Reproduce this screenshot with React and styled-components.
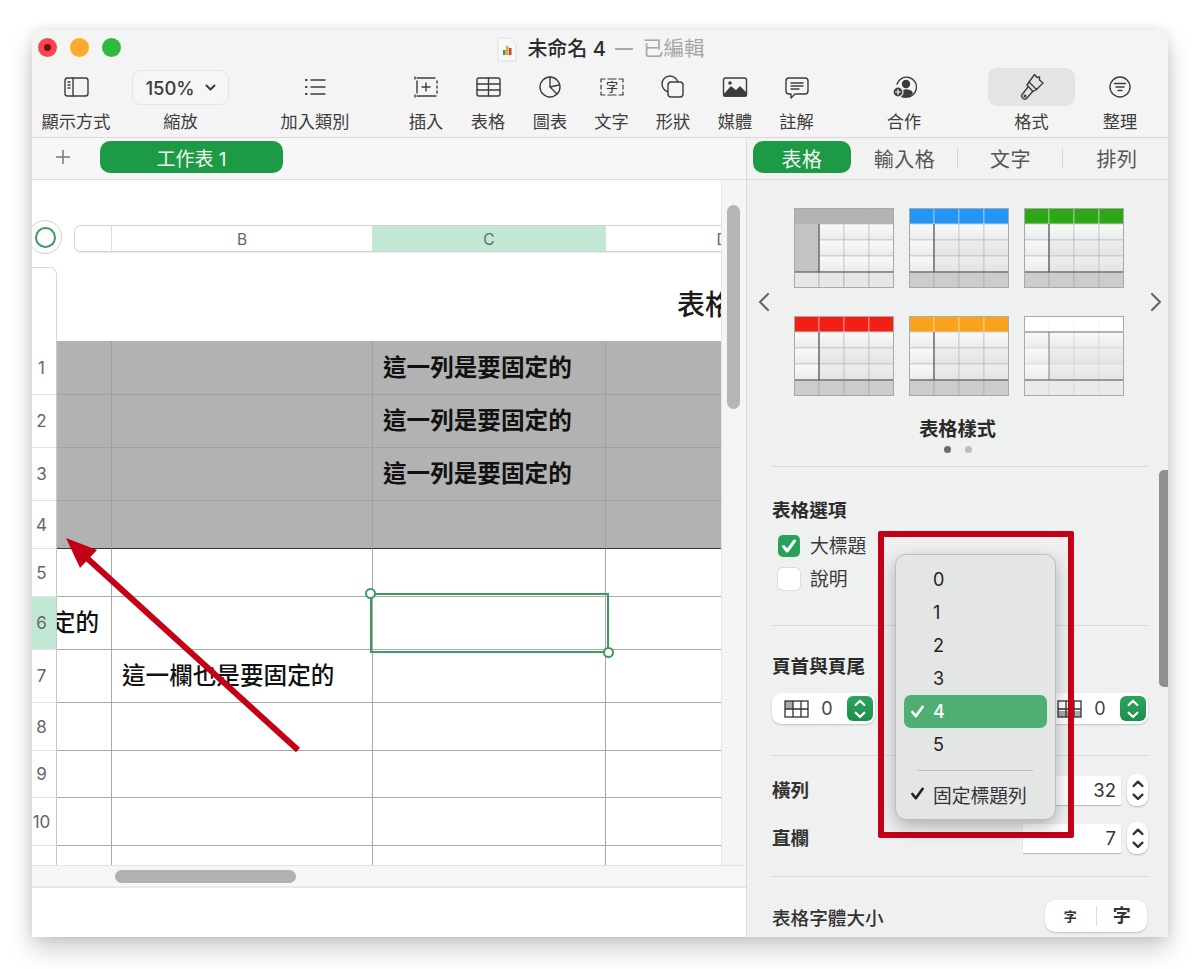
import React from "react";
import styled, { createGlobalStyle } from "styled-components";

const Global = createGlobalStyle`
  html, body { margin: 0; padding: 0; background: #fff; }
  body { font-family: Inter, "Noto Sans CJK TC", sans-serif; color: #333; overflow: hidden; }
  * { box-sizing: border-box; }
`;

const Page = styled.div`
  width: 1200px; height: 969px; padding: 30px 32px 32px; overflow: hidden;
`;
const Window = styled.div`
  position: relative; width: 1136px; height: 907px; background: #fff;
  border-radius: 12px 12px 0 0; overflow: visible;
  box-shadow: 0 12px 26px rgba(0,0,0,.2), 0 0 12px rgba(0,0,0,.1);
  display: flex; flex-direction: column;
`;
const Toolbar = styled.header`
  height: 108px; background: #f3f4f3; border-bottom: 1px solid #d8d8d8;
  border-radius: 12px 12px 0 0; display: flex; flex-direction: column;
`;
const TitleRow = styled.div`
  height: 38px; position: relative; display: flex; align-items: center; justify-content: center;
`;
const Lights = styled.div`
  position: absolute; left: 6px; top: 8px; display: flex; gap: 13px;
`;
const Light = styled.span`
  width: 19px; height: 19px; border-radius: 50%; background: ${p => p.$c};
  display: flex; align-items: center; justify-content: center;
  &::after { content: ""; width: 7px; height: 7px; border-radius: 50%; background: ${p => p.$dot || "transparent"}; }
`;
const DocTitle = styled.div`
  display: flex; align-items: center; margin-left: 2px;
`;
const TitleName = styled.span`
  font-size: 20px; font-weight: 500; color: #2c2c2c; margin: 0 9px 0 10px; line-height: 36px;
`;
const TitleDash = styled.span`
  width: 18px; height: 2px; background: #a9a9a9; margin-right: 10px;
`;
const TitleState = styled.span`
  font-size: 20.600px; color: #a6a8a6; line-height: 36px;
`;
const ToolRow = styled.div`
  display: flex; height: 68px;
`;
const Tool = styled.div`
  width: ${p => p.$w}px; margin-left: ${p => p.$ml || 0}px; display: flex; flex-direction: column; align-items: center;
`;
const IconSlot = styled.div`
  height: 38px; width: ${p => p.$active ? "87px" : "100%"}; display: flex; align-items: center; justify-content: center;
  color: #3c3c3c; border-radius: 9px; background: ${p => p.$active ? "#e3e4e3" : "transparent"};
`;
const ToolLabel = styled.div`
  height: 30px; line-height: 32px; font-size: 17.200px; color: #3d3d3d; white-space: nowrap;
`;
const ZoomBox = styled.div`
  height: 35px; width: 97px; margin-top: 2px; margin-bottom: 1px; border: 1px solid #e3e4e3; border-radius: 9px; background: #f5f6f5;
  display: flex; align-items: center; justify-content: center; gap: 10px; font-size: 18.400px; font-weight: 500; color: #3a3a3a;
`;
const Main = styled.div`
  flex: 1; display: flex; min-height: 0; overflow: hidden;
`;
const Left = styled.section`
  width: 714px; display: flex; flex-direction: column; background: #fff;
`;
const SheetTabs = styled.div`
  height: 42px; background: #f6f7f6; border-bottom: 1px solid #dfdfdf; display: flex; align-items: center; padding: 0 0 3px 0;
`;
const AddSheet = styled.div`
  width: 68px; display: flex; justify-content: center; color: #777; padding-right: 7px;
`;
const SheetTab = styled.div`
  width: 183px; height: 32px; border-radius: 10px; background: #1d9a46; color: #eef8f0; font-size: 19px;
  display: flex; align-items: center; justify-content: center;
`;
const SheetBody = styled.div`
  height: 685px; display: flex; background: #f4f5f4;
`;
const Canvas = styled.div`
  width: 690px; height: 685px; background: #fff; overflow: hidden; padding-top: 45px; position: relative;
  border-right: 1px solid #e5e5e5;
`;
const VTrack = styled.div`
  flex: 1; padding: 25px 6px 0 5px;
`;
const VThumb = styled.div`
  height: 204px; width: 13px; border-radius: 7px; background: #b4b5b4;
`;
const ColHeader = styled.div`
  height: 27px; margin-left: 42px; display: grid; grid-template-columns: 37px 261px 233px 233px; width: 764px;
  border: 1px solid #d2d2d2; border-right: 0; border-radius: 7px 0 0 7px; box-shadow: 0 1px 1px rgba(0,0,0,.08); overflow: hidden;
`;
const ColCell = styled.div`
  display: flex; align-items: center; justify-content: center; font-size: 15.500px; color: #666; padding-top: 1px;
  border-right: 1px solid #dcdcdc; background: ${p => p.$sel ? "#c0e8d2" : "#fff"};
`;
const SelectCircle = styled.div`
  position: absolute; left: -4px; top: 40px; width: 34px; height: 34px; border-radius: 50%; background: #fff;
  border: 1px solid #cfcfcf; display: flex; align-items: center; justify-content: center;
  &::after { content: ""; width: 17px; height: 17px; border-radius: 50%; border: 2px solid #3f9a60; }
`;
const TitleBand = styled.div`
  margin-top: 15px; height: 74px; display: flex;
`;
const TitleCorner = styled.div`
  width: 25px; flex: none; border: 1px solid #d8d8d8; border-left: 0; border-bottom: 0; border-radius: 0 7px 0 0;
`;
const TableTitle = styled.div`
  flex: 1; padding-left: 620px; white-space: nowrap; font-size: 28px; font-weight: 500; color: #1a1a1a; line-height: 76px;
`;
const Grid = styled.div`
  display: grid; grid-template-columns: 25px 55px 261px 233px 116px;
  grid-template-rows: 54px 53px 53px 48px 48px 53px 53px 48px 47px 48px 20px;
`;
const RowHead = styled.div`
  background: ${p => p.$sel ? "#c0e8d2" : "#fff"}; border-bottom: 1px solid #e2e2e2; border-right: 1px solid #c8c8c8;
  font-size: 17px; color: #666; display: flex; align-items: ${p => p.$cut ? "flex-start" : "center"}; justify-content: center; padding-right: 5px;
  overflow: hidden; padding-top: ${p => p.$cut ? "16px" : "0"};
`;
const Cell = styled.div`
  background: ${p => p.$head ? "#b1b2b1" : "#fff"};
  border-right: 1px solid ${p => p.$head ? "#a0a1a0" : "#aaa"};
  border-bottom: 1px solid ${p => p.$last ? "#333" : p.$head ? "#a0a1a0" : "#aaa"};
  font-size: 23.600px; font-weight: ${p => p.$head ? 700 : 500}; color: #111; display: flex; align-items: center;
  justify-content: ${p => p.$end ? "flex-end" : "flex-start"};
  padding: 0 ${p => p.$end ? "12px" : "10px"}; white-space: nowrap; line-height: 1; overflow: hidden;
`;
const Selection = styled.div`
  position: absolute; left: 338px; top: 413px; width: 239px; height: 60px; border: 2px solid #3f9a60; background: transparent;
`;
const Handle = styled.span`
  position: absolute; width: 11px; height: 11px; border-radius: 50%; background: #fff; border: 2px solid #3f9a60;
  ${p => p.$start ? "left: -7px; top: -7px;" : "right: -7px; bottom: -7px;"}
`;
const HTrack = styled.div`
  height: 23px; background: #f5f6f5; border-top: 1px solid #e4e4e4; border-bottom: 2px solid #e8e8e8; padding: 4px 0 0 83px;
`;
const HThumb = styled.div`
  width: 181px; height: 13px; border-radius: 7px; background: #b0b1b0;
`;
const Footer = styled.div`
  flex: 1; background: #fff;
`;
const Right = styled.aside`
  flex: 1; background: #eff0f0; border-left: 1px solid #dcdcdc; position: relative; overflow: hidden;
`;
const PanelTabs = styled.div`
  height: 42px; background: #f1f2f1; border-bottom: 1px solid #dcdcdc; display: flex; align-items: center; padding: 0 0 3px 6px;
  font-size: 20px; color: #555;
`;
const PanelTab = styled.div`
  width: ${p => p.$w}px; height: 32px; padding-top: 2px; display: flex; align-items: center; justify-content: center; letter-spacing: .5px; flex: none;
  ${p => p.$active && "background: #1d9a46; color: #f1faf3; border-radius: 10px;"}
  ${p => p.$sep && "position: relative; &::after { content: ''; position: absolute; right: 0; top: 7px; height: 20px; width: 1px; background: #d5d6d5; }"}
`;
const Styles = styled.div`
  padding-top: 28px; display: flex; flex-direction: column;
`;
const Carousel = styled.div`
  display: flex; align-items: center; padding-left: 11px; color: #666;
`;
const ThumbGrid = styled.div`
  width: 330px; margin: 0 26px 0 24px; display: grid; grid-template-columns: repeat(3, 100px); grid-template-rows: 80px 79px; gap: 28px 15px;
`;
const StylesLabel = styled.div`
  margin-top: 22px; text-align: center; font-size: 19.200px; font-weight: 700; color: #2a2a2a; line-height: 24px;
`;
const Dots = styled.div`
  display: flex; justify-content: center; gap: 14px; margin-top: 5px; height: 8px;
`;
const Dot = styled.span`
  width: 7px; height: 7px; border-radius: 50%; background: ${p => p.$on ? "#6a6a6a" : "#bcbdbc"};
`;
const Section = styled.div`
  margin: 0 20px 0 25px; border-top: 1px solid #d8d9d8; padding: ${p => p.$pad};
`;
const OptionsSection = styled(Section)`
  margin-top: 12px;
`;
const Heading = styled.div`
  font-size: 18.600px; font-weight: 600; line-height: 22px; color: #2c2c2c;
`;
const CheckRow = styled.label`
  display: flex; align-items: center; height: 24px; padding-left: 6px; margin-top: ${p => p.$mt}px; font-size: 18.800px; color: #3a3a3a; gap: 10px;
`;
const CheckText = styled.span`
  margin-top: -3px;
`;
const Box = styled.span`
  width: 22px; height: 22px; border-radius: 5px; display: flex; align-items: center; justify-content: center;
  background: ${p => p.$on ? "#28a25a" : "#fff"}; box-shadow: ${p => p.$on ? "none" : "0 0 0 1px #dcdcdc"};
  color: #fff;
`;
const PillRow = styled.div`
  display: flex; justify-content: space-between; margin-top: 16px;
`;
const Pill = styled.div`
  width: 103px; height: 31px; background: #fff; border-radius: 9px; box-shadow: 0 1px 2px rgba(0,0,0,.2);
  display: flex; align-items: center; padding-left: 12px; font-size: 18px; color: #444;
`;
const PillValue = styled.span`
  width: 38px; text-align: center; padding-right: 2px;
`;
const GreenStep = styled.span`
  width: 26px; height: 25px; border-radius: 6px; background: linear-gradient(#2aa55e, #1e8e4a); display: flex; flex-direction: column; gap: 4px; align-items: center; justify-content: center;
`;
const FieldRow = styled.div`
  display: flex; align-items: center; height: 32px; margin-top: ${p => p.$mt}px; font-size: 18.600px; font-weight: 600; color: #333;
`;
const FieldLabel = styled.span`
  flex: 1; padding-bottom: 3px;
`;
const NumField = styled.div`
  width: 98px; height: 29px; background: #fff; box-shadow: 0 1px 1px rgba(0,0,0,.2); text-align: right; padding-right: 5px;
  font-size: 18.500px; font-weight: 400; line-height: 29px; color: #333; margin-right: 6px;
`;
const Spinner = styled.div`
  width: 21px; height: 32px; background: #fff; border-radius: 9px; box-shadow: 0 1px 2px rgba(0,0,0,.25);
  display: flex; flex-direction: column; align-items: center; justify-content: center; gap: 5px; color: #333;
`;
const SizeRow = styled.div`
  display: flex; align-items: center; justify-content: space-between; font-size: 18.600px; font-weight: 500; color: #333;
`;
const SizeButtons = styled.div`
  width: 102px; height: 32px; border-radius: 10px; background: #fff; box-shadow: 0 1px 2px rgba(0,0,0,.2); display: flex; align-items: center; margin-right: 1px;
`;
const SizeBtn = styled.span`
  flex: 1; text-align: center; font-size: ${p => p.$s}px; font-weight: 600; color: #333; line-height: 20px;
  ${p => p.$sep && "border-right: 1px solid #dcdcdc;"}
`;
const SideThumb = styled.div`
  position: absolute; right: 0; top: 332px; width: 9px; height: 217px; background: #8e8f8e; border-radius: 5px 0 0 5px;
`;
const RedBox = styled.div`
  position: absolute; left: 846px; top: 501px; width: 196px; height: 307px; border: 6px solid #c40016; border-radius: 2px; z-index: 3;
`;
const Menu = styled.div`
  position: absolute; left: 863px; top: 524px; width: 161px; height: 266px; z-index: 4; background: #e4e5e5; border-radius: 11px;
  border: 1px solid #bdbdbd; box-shadow: 0 6px 18px rgba(0,0,0,.28); padding: 8px 8px 0; display: flex; flex-direction: column;
  font-size: 18px; color: #222;
`;
const MenuItem = styled.div`
  height: 33px; flex: none; border-radius: 7px; display: flex; align-items: center; position: relative; padding-left: 29px;
  ${p => p.$on && "background: #4fae72; color: #fff; font-weight: 500;"}
`;
const MenuCheck = styled.span`
  position: absolute; left: 6px; top: 9px; display: flex; color: ${p => p.$white ? "#fff" : "#222"};
`;
const MenuSep = styled.div`
  height: 1px; background: #bcbdbc; margin: 9px 14px 6px; flex: none;
`;
const MenuWide = styled(MenuItem)`
  height: 34px; font-size: 18.800px; color: #333;
`;
const ArrowSvg = styled.svg`
  position: absolute; left: 28px; top: 500px; z-index: 2; pointer-events: none;
`;

const Svg = ({ children, w = 26, h = 24, vb }) => (
  <svg width={w} height={h} viewBox={vb || `0 0 ${w} ${h}`} fill="none" stroke="currentColor" strokeWidth="1.400" strokeLinecap="round" strokeLinejoin="round">{children}</svg>
);

const icons = {
  view: <Svg><rect x="2" y="3" width="23" height="18" rx="2.500"/><path d="M10 3v18"/><path d="M5 7h2M5 10h2M5 13h2" /></Svg>,
  list: <Svg><path d="M9 5h14M9 12h14M9 19h14" /><path d="M4 5h.5M4 12h.5M4 19h.5" strokeWidth="2.200"/></Svg>,
  insert: <Svg><path d="M4 3h18M4 21h19M4 6v12M24 6v2M24 11v2M24 16v2" /><path d="M9 12h8M13 8v8"/><path d="M2 2v2M2 20v2" /></Svg>,
  table: <Svg><rect x="2" y="3" width="23" height="18" rx="2"/><path d="M2 9h23M2 15h23M13.500 3v18"/></Svg>,
  chart: <Svg><circle cx="13" cy="12" r="10"/><path d="M13 2v10l7 7M13 12l9-2"/></Svg>,
  text: <Svg><path d="M6 4H2v3M20 4h4v3M6 20H2v-3M20 20h4v-3M2 10v4M24 10v4M9 4h8M9 20h8" strokeWidth="1.200"/><text x="13" y="17" textAnchor="middle" fontSize="12" fill="currentColor" stroke="none" fontWeight="500">字</text></Svg>,
  shape: <Svg><circle cx="10" cy="9" r="8" /><rect x="8" y="7" width="15" height="15" rx="3" fill="#f3f4f3"/></Svg>,
  media: <Svg><rect x="1.500" y="3" width="23" height="18" rx="2"/><path d="M2 20l7-8 5 4 4-4 6 6v3H2z" fill="currentColor"/><circle cx="8" cy="8" r="1.800" fill="currentColor" stroke="none"/></Svg>,
  comment: <Svg><path d="M5 3h16a3 3 0 0 1 3 3v10a3 3 0 0 1-3 3H11l-4 4v-4H5a3 3 0 0 1-3-3V6a3 3 0 0 1 3-3z"/><path d="M7 8h12M7 11h12M7 14h8"/></Svg>,
  share: <Svg><path d="M6 9a10 10 0 1 1 8 13"/><circle cx="15" cy="9" r="3.500" fill="currentColor"/><path d="M10 21c0-5 3-6 5-6s6 1 6 3c-2 3-6 4-9 4z" fill="currentColor"/><circle cx="7" cy="17" r="5" fill="#3c3c3c" stroke="#f3f4f3" strokeWidth="1.200"/><path d="M4.500 17h5M7 14.500v5" stroke="#fff" strokeWidth="1.200"/></Svg>,
  brush: <Svg w={24} h={28}><path d="M9 9L14.500 1.500 17 4.500 19.500 4 19.500 7 23 10 16.500 16.500z"/><path d="M9 9L7 12l6 6.500 3.500-2"/><path d="M8.500 13.500L2.500 21a3 3 0 0 0 4.500 4L13 18"/><circle cx="5" cy="23" r=".9"/></Svg>,
  organize: <Svg><circle cx="13" cy="12" r="10"/><path d="M7.500 8.500h11M9 12h8M11 15.500h4"/></Svg>,
};

const tools = [
  ["view", "顯示方式", 88, 0], ["zoom", "縮放", 97, 12], ["list", "加入類別", 80, 46],
  ["insert", "插入", 62, 40], ["table", "表格", 62], ["chart", "圖表", 62], ["text", "文字", 61],
  ["shape", "形狀", 62], ["media", "媒體", 62], ["comment", "註解", 61],
  ["share", "合作", 80, 37], ["brush", "格式", 87, 44], ["organize", "整理", 80, 5],
];

const Chev = ({ up, size = 11, color = "currentColor", sw = 2 }) => (
  <svg width={size} height={size * 0.64} viewBox="0 0 11 7" fill="none" stroke={color} strokeWidth={sw} strokeLinecap="round" strokeLinejoin="round">
    <path d={up ? "M1.500 5.500L5.500 1.500l4 4" : "M1.500 1.500l4 4 4-4"} />
  </svg>
);
const Check = ({ size = 16, sw = 3 }) => (
  <svg width={size} height={size} viewBox="0 0 16 16" fill="none" stroke="currentColor" strokeWidth={sw} strokeLinecap="round" strokeLinejoin="round">
    <path d="M2.500 8.500l3.700 4.500 7.300-10" />
  </svg>
);

const Thumb = ({ id, head, col, foot, mid, white }) => {
  const xs = [0, 25, 50, 75];
  const ys = [16, 32, 48];
  const line = white ? "#d6d7d6" : "#bcbdbc";
  return (
    <svg width="100" height="80" viewBox="0 0 100 80">
      <defs>
        <linearGradient id={`g${id}`} x1="0" y1="0" x2="0" y2="1">
          <stop offset="0" stopColor="#fafafa" /><stop offset="1" stopColor="#e9eaea" />
        </linearGradient>
        <linearGradient id={`m${id}`} x1="0" y1="0" x2="0" y2="1">
          <stop offset="0" stopColor="#eeeeee" /><stop offset="1" stopColor="#e2e3e3" />
        </linearGradient>
      </defs>
      {xs.map(x => <rect key={`h${x}`} x={x} y="0" width="25" height="16" fill={head} stroke={white ? "#eeeeee" : "#f0f0f0"} strokeOpacity={col ? .1 : .7} strokeWidth=".7" />)}
      {ys.map((y, r) => xs.map(x => (
        <rect key={`${x}${y}`} x={x} y={y} width="25" height="16"
          fill={x === 0 && col ? col : r === 0 || x === 0 ? `url(#g${id})` : (mid ? `url(#m${id})` : `url(#g${id})`)} stroke={line} strokeWidth=".7" />
      )))}
      {xs.map(x => <rect key={`f${x}`} x={x} y="64" width="25" height="16" fill={foot} stroke={white ? line : "#aaa"} strokeWidth=".7" />)}
      <path d="M25 16V64" stroke={white ? "#999" : "#555"} strokeWidth="1.200" />
      <path d="M0 64H100" stroke="#555" strokeWidth="1.200" />
      {white && <path d="M0 16H100" stroke="#777" strokeWidth="1.200" />}
      <rect x=".5" y=".5" width="99" height="79" fill="none" stroke={white ? "#aaa" : "#a8a9a8"} strokeWidth="1" />
    </svg>
  );
};

const thumbs = [
  { head: "#b2b3b2", col: "#c2c3c2", foot: "#e6e7e7" },
  { head: "#2295f5", foot: "#cbcccc", mid: true },
  { head: "#2da716", foot: "#cbcccc", mid: true },
  { head: "#f21f14", foot: "#cbcccc", mid: true },
  { head: "#f9a31a", foot: "#cbcccc", mid: true },
  { head: "#ffffff", foot: "#e9eaea", mid: true, white: true },
];

const MiniTable = ({ foot }) => (
  <svg width="25" height="18" viewBox="0 0 25 18" fill="none" stroke="#333" strokeWidth="1.300" style={{ flex: "none" }}>
    {foot
      ? <rect x="1" y="11" width="23" height="6" fill="#aaa" stroke="none" />
      : <rect x="1" y="1" width="8" height="8" fill="#aaa" stroke="none" />}
    <rect x="1" y="1" width="23" height="16" /><path d="M1 9h23M9 1v16M17 1v16" />
  </svg>
);

const rows = [
  { n: 1, head: true, c: "這一列是要固定的" },
  { n: 2, head: true, c: "這一列是要固定的" },
  { n: 3, head: true, c: "這一列是要固定的" },
  { n: 4, head: true, last: true },
  { n: 5 },
  { n: 6, sel: true, a: "定的" },
  { n: 7, b: "這一欄也是要固定的" },
  { n: 8 }, { n: 9 }, { n: 10 }, { n: 11, cut: true },
];

const Stepper = () => (
  <GreenStep><Chev up size={12} color="#fff" /><Chev size={12} color="#fff" /></GreenStep>
);

export default function App() {
  return (
    <Page>
      <Global />
      <Window>
        <Toolbar>
          <TitleRow>
            <Lights>
              <Light $c="#f5484c" $dot="#7a0a0c" />
              <Light $c="#fbab2a" />
              <Light $c="#2fb83c" />
            </Lights>
            <DocTitle>
              <svg width="20" height="25" viewBox="0 0 20 25">
                <path d="M1 1h13l5 5v18H1z" fill="#f8f8f8" stroke="#dedede" />
                <rect x="6" y="13" width="2.500" height="5" fill="#2f9e44" />
                <rect x="9" y="9" width="2.500" height="9" fill="#f0a020" />
                <rect x="12" y="11" width="2.500" height="7" fill="#d04030" />
              </svg>
              <TitleName>未命名 4</TitleName>
              <TitleDash />
              <TitleState>已編輯</TitleState>
            </DocTitle>
          </TitleRow>
          <ToolRow>
            {tools.map(([k, label, w, ml]) => (
              <Tool key={k} $w={w} $ml={ml}>
                {k === "zoom"
                  ? <ZoomBox>150%<Chev size={11} /></ZoomBox>
                  : <IconSlot $active={k === "brush"}>{icons[k]}</IconSlot>}
                <ToolLabel>{label}</ToolLabel>
              </Tool>
            ))}
          </ToolRow>
        </Toolbar>
        <Main>
          <Left>
            <SheetTabs>
              <AddSheet>
                <svg width="16" height="16" viewBox="0 0 16 16" stroke="currentColor" strokeWidth="1.500"><path d="M8 1v14M1 8h14" /></svg>
              </AddSheet>
              <SheetTab>工作表 1</SheetTab>
            </SheetTabs>
            <SheetBody>
              <Canvas>
                <SelectCircle />
                <ColHeader>
                  <ColCell />
                  <ColCell>B</ColCell>
                  <ColCell $sel>C</ColCell>
                  <ColCell>D</ColCell>
                </ColHeader>
                <TitleBand>
                  <TitleCorner />
                  <TableTitle>表格 1</TableTitle>
                </TitleBand>
                <Grid>
                  {rows.map(r => (
                    <React.Fragment key={r.n}>
                      <RowHead $sel={r.sel} $cut={r.cut}>{r.n}</RowHead>
                      <Cell $head={r.head} $last={r.last} $end={!!r.a}>{r.a}</Cell>
                      <Cell $head={r.head} $last={r.last}>{r.b}</Cell>
                      <Cell $head={r.head} $last={r.last}>{r.c}</Cell>
                      <Cell $head={r.head} $last={r.last} />
                    </React.Fragment>
                  ))}
                </Grid>
                <Selection><Handle $start /><Handle /></Selection>
              </Canvas>
              <VTrack><VThumb /></VTrack>
            </SheetBody>
            <HTrack><HThumb /></HTrack>
            <Footer />
          </Left>
          <Right>
            <PanelTabs>
              <PanelTab $w={98} $active>表格</PanelTab>
              <PanelTab $w={107} $sep>輸入格</PanelTab>
              <PanelTab $w={105} $sep>文字</PanelTab>
              <PanelTab $w={108}>排列</PanelTab>
            </PanelTabs>
            <Styles>
              <Carousel>
                <svg width="12" height="20" viewBox="0 0 12 20" fill="none" stroke="currentColor" strokeWidth="2.200" strokeLinecap="round" strokeLinejoin="round"><path d="M10 2L2 10l8 8" /></svg>
                <ThumbGrid>
                  {thumbs.map((t, i) => <Thumb key={i} id={i} {...t} />)}
                </ThumbGrid>
                <svg width="12" height="20" viewBox="0 0 12 20" fill="none" stroke="currentColor" strokeWidth="2.200" strokeLinecap="round" strokeLinejoin="round"><path d="M2 2l8 8-8 8" /></svg>
              </Carousel>
              <StylesLabel>表格樣式</StylesLabel>
              <Dots><Dot $on /><Dot /></Dots>
            </Styles>
            <OptionsSection $pad="32px 0 34px">
              <Heading>表格選項</Heading>
              <CheckRow $mt={13}><Box $on><Check /></Box><CheckText>大標題</CheckText></CheckRow>
              <CheckRow $mt={9}><Box /><CheckText>說明</CheckText></CheckRow>
            </OptionsSection>
            <Section $pad="29px 0 31px">
              <Heading>頁首與頁尾</Heading>
              <PillRow>
                <Pill><MiniTable /><PillValue>0</PillValue><Stepper /></Pill>
                <Pill><MiniTable foot /><PillValue>0</PillValue><Stepper /></Pill>
              </PillRow>
            </Section>
            <Section $pad="18px 0 22px">
              <FieldRow $mt={0}>
                <FieldLabel>橫列</FieldLabel>
                <NumField>32</NumField>
                <Spinner><Chev up size={12} sw={2.200} /><Chev size={12} sw={2.200} /></Spinner>
              </FieldRow>
              <FieldRow $mt={16}>
                <FieldLabel>直欄</FieldLabel>
                <NumField>7</NumField>
                <Spinner><Chev up size={12} sw={2.200} /><Chev size={12} sw={2.200} /></Spinner>
              </FieldRow>
            </Section>
            <Section $pad="23px 0 0">
              <SizeRow>
                表格字體大小
                <SizeButtons>
                  <SizeBtn $s={13} $sep>字</SizeBtn>
                  <SizeBtn $s={18}>字</SizeBtn>
                </SizeButtons>
              </SizeRow>
            </Section>
            <SideThumb />
          </Right>
        </Main>

        <ArrowSvg width="245" height="225" viewBox="0 0 245 225">
          <path d="M28 29L238 220" stroke="#c40016" strokeWidth="6" />
          <polygon points="6,8 37,20 20,38" fill="#c40016" />
        </ArrowSvg>
        <RedBox />
        <Menu>
          {[0, 1, 2, 3].map(n => <MenuItem key={n}>{n}</MenuItem>)}
          <MenuItem $on><MenuCheck $white><Check size={15} sw={2.800} /></MenuCheck>4</MenuItem>
          <MenuItem>5</MenuItem>
          <MenuSep />
          <MenuWide><MenuCheck><Check size={15} sw={2.800} /></MenuCheck>固定標題列</MenuWide>
        </Menu>
      </Window>
    </Page>
  );
}
